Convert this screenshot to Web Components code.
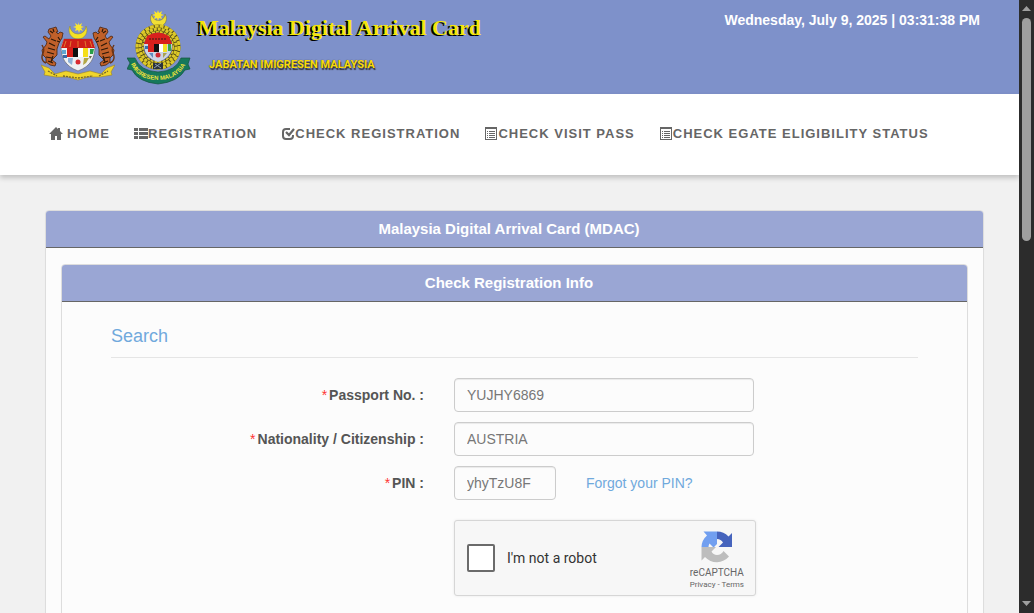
<!DOCTYPE html>
<html lang="en">
<head>
<meta charset="utf-8">
<title>Malaysia Digital Arrival Card</title>
<style>
html, body { margin: 0; height: 100%; }
body { overflow: hidden; background: #f1f1f1; font: 14px/20px "Liberation Sans", Arial, sans-serif; color: #555; }
</style>
</head>
<body>
<mdac-app></mdac-app>

<script>
function define(name, html) {
  customElements.define(name, class extends HTMLElement {
    constructor() {
      super();
      const t = document.createElement('template');
      t.innerHTML = html;
      this.attachShadow({ mode: 'open' }).append(t.content.cloneNode(true));
    }
  });
}

/* One tiger supporter, facing right; mirrored for the other side */
const tiger = `
<path d="M17 10l-2-5-3 1-4 1-1 3 3 4-2 3-4-3-2 1 4 5-1 3-4 5 1 5 3 3 0 4 4 3 5 1 1-3-4-3 5-5 0-6 2-6 3-5 1-5-3-1-2 2-2-2z" fill="#c0602a" stroke="#4a2410" stroke-width=".8"/>
<path d="M9 9l3 2M12 7l1 3M10 17l5 2M8 21l6 3M7 26l7 2M6 30l7 2M5 35l6 1M7 39l5 2M17 15l2 3M16 19l3 1M12 34l-2 6" stroke="#2c1808" stroke-width="1.200" fill="none"/>
<path d="M5 41C1 40 0 35 2 31s0-6-1-8" stroke="#6b3413" stroke-width="1.400" fill="none"/>`;

/* National coat of arms */
define('state-arms', `
<style>:host { display: block; } svg { display: block; }</style>
<svg width="74" height="60" viewBox="0 0 74 60" role="img" aria-label="Coat of arms of Malaysia">
  <path d="M29 4a9 9 0 1 0 16 0a7.500 7.500 0 1 1-16 0z" fill="#f4e225" stroke="#8c8138" stroke-width=".5"/>
  <path d="M37 0l1 3 3-2-1 3 3 1-3 1 2 3-3-1-1 3-1-3-3 1 1-3-3-1 3-1-1-3 3 2z" fill="#fae631"/>
  <g>${tiger}</g>
  <g transform="translate(74 0) scale(-1 1)">${tiger}</g>
  <path d="M23 17h28l3 7c0 12-4 20-17 25C24 44 20 36 20 24z" fill="#eef1f4" stroke="#6a6a72" stroke-width=".7"/>
  <path d="M23 17h28l3 9H20z" fill="#cf1d18"/>
  <path d="M25 19l-2 6M30 19l-1 6M37 19v6M44 19l1 6M49 19l2 6" stroke="#e8a03a" stroke-width=".7"/>
  <path d="M26 26h6v9h-6z" fill="#d91f1b"/><path d="M32 26h5v9h-5z" fill="#111"/><path d="M37 26h5v9h-5z" fill="#fff"/><path d="M42 26h5v9h-5z" fill="#f5df1b"/>
  <path d="M21 28h4v4h-4z" fill="#60a5cf"/><path d="M22 33h4v3h-4z" fill="#3969a5"/><path d="M49 27h4l-1 5h-3z" fill="#299e47"/><path d="M48 34h3l-2 3z" fill="#6b6347"/>
  <path d="M27 36h5l-1 7-4-3z" fill="#8eb2d9"/><path d="M43 36h5l-3 5-3 2z" fill="#b2a747"/>
  <circle cx="37" cy="40" r="2.500" fill="#d82c32"/>
  <path d="M0 43l8 3 6 6 11-3 12 3 12-3 11 3 6-6 8-3-4 7 1 3-12 2-12 0-10 3-10-3-12 0-12-2 1-3z" fill="#f0d52b" stroke="#9c8423" stroke-width=".6"/>
  <path d="M7 49l9 5M58 54l9-5M22 54l15 2 15-2" stroke="#75672b" stroke-width="1.300" stroke-dasharray="2 1" fill="none"/>
</svg>`);

/* Immigration department crest */
define('immigration-crest', `
<style>:host { display: block; } svg { display: block; } text { font: bold 6px "Liberation Sans", Arial, sans-serif; }</style>
<svg width="64" height="76" viewBox="0 0 64 76" role="img" aria-label="Immigration department crest">
  <path d="M25 4a8 8 0 1 0 13 0a6.500 6.500 0 1 1-13 0z" fill="#f1df35" stroke="#77743f" stroke-width=".6"/>
  <path d="M31 0l1 3 3-2-1 3 3 1-3 1 1 3-3-1-1 3-1-3-3 1 1-3-3-1 3-1-1-3 3 2z" fill="#fbe72a"/>
  <circle cx="31" cy="37" r="18" fill="none" stroke="#514a17" stroke-width="9"/>
  <g fill="none" stroke="#dcc828">
    <circle cx="31" cy="37" r="21" stroke-width="3" stroke-dasharray="4 1"/>
    <circle cx="31" cy="37" r="18" stroke-width="3" stroke-dasharray="3 1"/>
    <circle cx="31" cy="37" r="15" stroke-width="2" stroke-dasharray="3 1"/>
  </g>
  <circle cx="31" cy="37" r="14" fill="#a5a4cf" stroke="#565e89"/>
  <path d="M20 26q11-7 22 0l3 8H17z" fill="#d8201d"/>
  <path d="M22 29h18" stroke="#832019" stroke-width="2" stroke-dasharray="2 1"/>
  <path d="M17 34h28c0 10-5 15-14 18-9-3-14-8-14-18z" fill="#cdd5e4"/>
  <path d="M21 34h6v8h-6z" fill="#d9221e"/><path d="M27 34h5v8h-5z" fill="#111"/><path d="M32 34h4v8h-4z" fill="#fff"/><path d="M36 34h4v8h-4z" fill="#f2e022"/><path d="M41 34h3v7h-3z" fill="#35a250"/>
  <path d="M18 36h3v3h-3z" fill="#3675ad"/><path d="M22 43h4v5z" fill="#608bbd"/><path d="M36 43h4l-4 5z" fill="#aaa151"/><circle cx="31" cy="45" r="2.500" fill="#d32831"/>
  <path d="M26 53h10v6H26z" fill="#2c333c"/><path d="M27 58l7-5M28 54l6 4" stroke="#8fa1b7"/>
  <path d="M0 48l8 0q5 13 23 14 18-1 23-14l9 0-2 6 2 5-5 1q-7 12-27 14Q11 72 5 60l-5-1 3-6z" fill="#16785b" stroke="#15533e" stroke-width=".7"/>
  <path id="motto" d="M4 54Q11 70 31 70T60 52" fill="none"/>
  <text fill="#f1e43a"><textPath href="#motto">IMIGRESEN MALAYSIA</textPath></text>
</svg>`);

define('site-banner', `
<style>
:host { display: flex; justify-content: space-between; align-items: flex-start; box-sizing: border-box; height: 94px; padding: 10px 39px 10px 41px; background: #7e91ca; }
.brand { display: flex; }
state-arms { margin: 12px 12px 0 0; }
.names { padding: 4px 0 0 7px; white-space: nowrap; }
h1 { margin: 0; font: bold 22px/28px "Liberation Serif", "Times New Roman", serif; color: #f6e50a; text-shadow: -2px 1px 0 #000; }
p { margin: 10px 0 0 11px; font: bold 11px/26px Roboto, Arial, sans-serif; color: #f9dc08; text-shadow: 1px 2px 1px #333, 0 0 1px #333; }
time { font-weight: bold; color: #fff; white-space: nowrap; }
</style>
<div class="brand"><state-arms></state-arms><immigration-crest></immigration-crest>
<div class="names"><h1>Malaysia Digital Arrival Card</h1><p>JABATAN IMIGRESEN MALAYSIA</p></div></div>
<time datetime="2025-07-09T15:31:38">Wednesday, July 9, 2025 | 03:31:38 PM</time>`);

const glyphs = {
  home: '<path d="M7 0L0 7h2v6h4V9h2v4h4V7h2l-3-3V1H9v1z"/>',
  list: '<path d="M0 1h4v3H0zM5 1h9v3H5zM0 5h4v3H0zM5 5h9v3H5zM0 9h4v3H0zM5 9h9v3H5z"/>',
  check: '<path d="M9 2H5Q2 2 2 5v4q0 3 3 3h4q3 0 3-3V8" fill="none" stroke="#666" stroke-width="2"/><path d="M5 5l3 3 5-6" fill="none" stroke="#666" stroke-width="2.200"/>',
  form: '<path fill-rule="evenodd" d="M1 0h12v13H1zM2 2v10h10V2z"/><path d="M3 4h1v1H3zM5 4h6v1H5zM3 6h1v1H3zM5 6h6v1H5zM3 8h1v1H3zM5 8h6v1H5zM3 10h1v1H3zM5 10h6v1H5z"/>'
};
customElements.define('nav-link', class extends HTMLElement {
  constructor() {
    super();
    this.attachShadow({ mode: 'open' }).innerHTML = `
<style>
:host { display: block; }
a { display: flex; align-items: center; gap: var(--icon-gap, 0); color: #666; text-decoration: none; font: bold 13px/20px "Liberation Sans", Arial, sans-serif; letter-spacing: 1px; white-space: nowrap; }
svg { fill: #666; flex: none; }
</style>
<a href="#"><svg width="14" height="14" viewBox="0 0 14 14" aria-hidden="true">${glyphs[this.getAttribute('icon')]}</svg><slot></slot></a>`;
  }
});

define('main-nav', `
<style>
:host { display: block; position: relative; background: #fff; box-shadow: 0 3px 5px rgba(0,0,0,.2); }
nav { display: flex; gap: 24px; padding: 30px 49px 31px; }
.first { --icon-gap: 4px; }
</style>
<nav>
<nav-link class="first" icon="home">HOME</nav-link>
<nav-link icon="list">REGISTRATION</nav-link>
<nav-link icon="check">CHECK REGISTRATION</nav-link>
<nav-link icon="form">CHECK VISIT PASS</nav-link>
<nav-link icon="form">CHECK EGATE ELIGIBILITY STATUS</nav-link>
</nav>`);

define('info-panel', `
<style>
:host { display: block; border: 1px solid #ddd; border-radius: 4px; background: #fcfcfc; box-shadow: 0 1px 1px rgba(0,0,0,.05); }
header { padding: 8px 26px 8px 15px; border-bottom: 1px solid #666; border-radius: 3px 3px 0 0; background: #9aa6d4; color: #fff; text-align: center; font: bold 15px/20px "Liberation Sans", Arial, sans-serif; }
.body { padding: 16px 15px; }
</style>
<header><slot name="title"></slot></header>
<div class="body"><slot></slot></div>`);

define('captcha-box', `
<style>
:host { display: flex; box-sizing: border-box; width: 302px; height: 76px; padding: 0 11px 0 12px; justify-content: space-between; align-items: center; border: 1px solid #d6d6d6; border-radius: 3px; background: #f7f7f7; box-shadow: 0 0 3px rgba(0,0,0,.08); font-family: Roboto, sans-serif; }
label { display: flex; align-items: center; gap: 12px; padding-bottom: 1px; font-size: 14px; color: #333; }
input { appearance: none; box-sizing: border-box; width: 28px; height: 28px; margin: 0; border: 2px solid #6b6b6b; border-radius: 2px; background: #fff; }
.mark { display: flex; flex-direction: column; align-items: center; padding-top: 5px; color: #666; }
.name { font-size: 10px; line-height: 14px; margin-top: 3px; }
.terms { font-size: 8px; line-height: 10px; }
a { color: inherit; text-decoration: none; }
svg { display: block; }
</style>
<label><input type="checkbox">I'm not a robot</label>
<div class="mark">
<svg width="32" height="32" viewBox="0 0 64 64" aria-hidden="true">
<path d="M62 32V4l-7 7A32 32 0 0 0 32 1v15q8 0 12 7l-9 9z" fill="#4664bd"/>
<path d="M32 1H5l7 8A32 32 0 0 0 1 32h14q0-4 2-7l8 8 7-7z" fill="#719ff0"/>
<path d="M1 32v27l7-7a32 32 0 0 0 48-1L45 40a16 16 0 0 1-13 8c-5 0-9-3-11-7l9-9z" fill="#bdbdbd"/>
</svg>
<span class="name">reCAPTCHA</span>
<span class="terms"><a href="#">Privacy</a> - <a href="#">Terms</a></span>
</div>`);

define('search-form', `
<style>
:host { display: block; padding: 7px 34px 10px; }
h2 { margin: 0 0 20px; padding-bottom: 9px; border-bottom: 1px solid #e5e5e5; font-size: 18px; line-height: 23px; font-weight: normal; color: #70a9dc; }
form { display: grid; grid-template-columns: minmax(0, 313px) 1fr; gap: 10px 30px; align-items: center; }
.label { text-align: right; font-weight: bold; color: #555; }
i { color: #f33; font-style: normal; font-weight: normal; margin-right: 2px; }
input { box-sizing: border-box; width: 300px; height: 34px; padding: 0 12px; border: 1px solid #ccc; border-radius: 4px; background: #fcfcfc; color: #777; font: 14px/20px "Liberation Sans", Arial, sans-serif; box-shadow: inset 0 1px 1px rgba(0,0,0,.075); }
.pin { display: flex; align-items: center; gap: 30px; }
.pin input { width: 102px; }
a { color: #70a9dc; text-decoration: none; }
captcha-box { grid-column: 2; margin-top: 10px; }
</style>
<h2>Search</h2>
<form>
<label class="label" for="passport"><i>*</i>Passport No. :</label><input id="passport" value="YUJHY6869">
<label class="label" for="nation"><i>*</i>Nationality / Citizenship :</label><input id="nation" value="AUSTRIA">
<label class="label" for="pin"><i>*</i>PIN :</label><div class="pin"><input id="pin" value="yhyTzU8F"><a href="#">Forgot your PIN?</a></div>
<captcha-box></captcha-box>
</form>`);

define('scroll-rail', `
<style>
:host { display: flex; flex-direction: column; justify-content: space-between; align-items: center; background: #2c2c2c; }
.top { display: flex; flex-direction: column; align-items: center; height: 241px; max-height: 50%; }
svg { display: block; flex: none; margin: 6px 0; }
.thumb { flex: 1; width: 9px; border-radius: 5px; background: #9f9f9f; }
</style>
<div class="top"><svg width="9" height="6" viewBox="0 0 9 6"><path d="M0 5L4.500 0 9 5z" fill="#9f9f9f"/></svg><div class="thumb"></div></div>
<svg width="9" height="6" viewBox="0 0 9 6"><path d="M0 0h9L4.500 5z" fill="#9f9f9f"/></svg>`);

define('mdac-app', `
<style>
:host { display: grid; grid-template-columns: minmax(0, 1fr) 15px; height: 100vh; }
.page { overflow: hidden; }
main { padding: 35px 35px 35px 45px; }
</style>
<div class="page">
<site-banner></site-banner>
<main-nav></main-nav>
<main><info-panel><span slot="title">Malaysia Digital Arrival Card (MDAC)</span>
<info-panel><span slot="title">Check Registration Info</span><search-form></search-form></info-panel>
</info-panel></main>
</div>
<scroll-rail></scroll-rail>`);
</script>
</body>
</html>
